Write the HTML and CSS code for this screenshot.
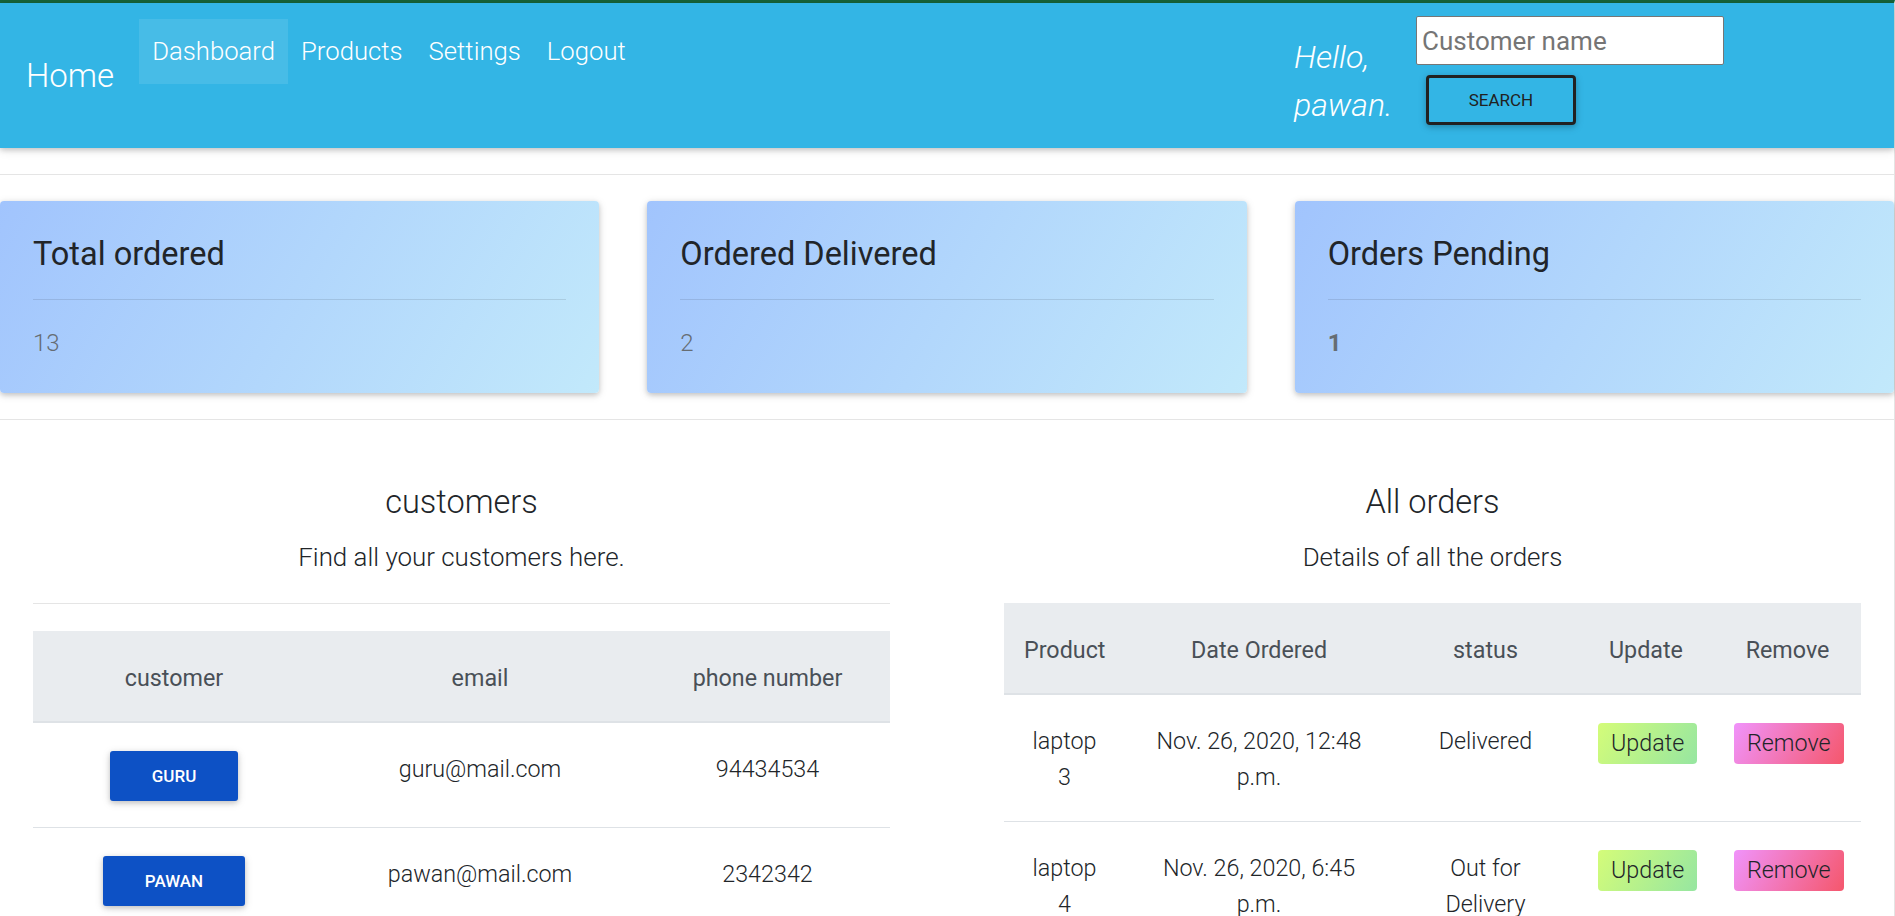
FILE: index.html
```html
<!DOCTYPE html>
<html lang="en">
<head>
<meta charset="utf-8">
<title>Dashboard</title>
<link rel="stylesheet" href="styles.css">
</head>
<body>
<div class="page">
  <nav class="navbar">
    <a class="brand" href="#">Home</a>
    <ul class="nav-links">
      <li><a class="nav-link active" href="#">Dashboard</a></li>
      <li><a class="nav-link" href="#">Products</a></li>
      <li><a class="nav-link" href="#">Settings</a></li>
      <li><a class="nav-link" href="#">Logout</a></li>
    </ul>
    <div class="nav-right">
      <span class="greeting">Hello, pawan.</span>
      <form class="search-form">
        <input class="search-input" type="text" placeholder="Customer name">
        <button class="btn-search" type="button">Search</button>
      </form>
    </div>
  </nav>

  <hr class="divider">

  <section class="stats">
    <div class="stat-card">
      <h5 class="stat-title">Total ordered</h5>
      <hr class="stat-rule">
      <p class="stat-value">13</p>
    </div>
    <div class="stat-card">
      <h5 class="stat-title">Ordered Delivered</h5>
      <hr class="stat-rule">
      <p class="stat-value">2</p>
    </div>
    <div class="stat-card">
      <h5 class="stat-title">Orders Pending</h5>
      <hr class="stat-rule">
      <p class="stat-value stat-value-strong">1</p>
    </div>
  </section>

  <hr class="divider">

  <section class="tables">
    <div class="panel">
      <h5 class="panel-title">customers</h5>
      <p class="panel-sub">Find all your customers here.</p>
      <hr class="panel-rule">
      <table class="data-table">
        <colgroup>
          <col class="c-cust">
          <col class="c-email">
          <col class="c-phone">
        </colgroup>
        <thead>
          <tr><th>customer</th><th>email</th><th>phone number</th></tr>
        </thead>
        <tbody>
          <tr>
            <td><a class="btn-name" href="#">Guru</a></td>
            <td>guru@mail.com</td>
            <td>94434534</td>
          </tr>
          <tr>
            <td><a class="btn-name" href="#">Pawan</a></td>
            <td>pawan@mail.com</td>
            <td>2342342</td>
          </tr>
        </tbody>
      </table>
    </div>

    <div class="panel">
      <h5 class="panel-title">All orders</h5>
      <p class="panel-sub">Details of all the orders</p>
      <table class="data-table">
        <colgroup>
          <col class="c-product">
          <col class="c-date">
          <col class="c-status">
          <col class="c-update">
          <col class="c-remove">
        </colgroup>
        <thead>
          <tr><th>Product</th><th>Date Ordered</th><th>status</th><th>Update</th><th>Remove</th></tr>
        </thead>
        <tbody>
          <tr>
            <td>laptop 3</td>
            <td>Nov. 26, 2020, 12:48 p.m.</td>
            <td>Delivered</td>
            <td><a class="btn-update" href="#">Update</a></td>
            <td><a class="btn-remove" href="#">Remove</a></td>
          </tr>
          <tr>
            <td>laptop 4</td>
            <td>Nov. 26, 2020, 6:45 p.m.</td>
            <td>Out for Delivery</td>
            <td><a class="btn-update" href="#">Update</a></td>
            <td><a class="btn-remove" href="#">Remove</a></td>
          </tr>
        </tbody>
      </table>
    </div>
  </section>
</div>
</body>
</html>
```

FILE: styles.css
```css
* { box-sizing: border-box; }

html, body {
  margin: 0;
  padding: 0;
  background: #fff;
}

body {
  overflow: hidden;
  font-family: Roboto, "Noto Sans", "Liberation Sans", sans-serif;
  font-weight: 300;
  font-size: 26px;
  line-height: 1.5;
  color: #212529;
}

.page {
  width: 1895px;
  border-top: 3px solid #17643a;
  border-right: 1px solid #e4e4e4;
  min-height: 916px;
}

/* ---------- navbar ---------- */
.navbar {
  position: relative;
  display: flex;
  align-items: flex-start;
  height: 145px;
  padding: 13px 24px 13px 26px;
  background: #33b5e5;
  box-shadow: 0 2px 5px 0 rgba(0,0,0,.16), 0 2px 10px 0 rgba(0,0,0,.12);
}

.brand {
  align-self: center;
  margin-right: 25px;
  font-size: 33px;
  font-weight: 300;
  line-height: 1.5;
  color: #fff;
  text-decoration: none;
}

.nav-links {
  display: flex;
  margin: 3px 0 0;
  padding: 0;
  list-style: none;
}

.nav-link {
  display: block;
  padding: 13px 13px;
  font-size: 25.7px;
  line-height: 39px;
  font-weight: 300;
  color: #fff;
  text-decoration: none;
}

.nav-link.active {
  background: rgba(255,255,255,.1);
}

.nav-right {
  display: flex;
  align-items: flex-start;
  margin-left: auto;
  margin-right: 146px;
}

.greeting {
  width: 104px;
  margin: 17px 18px 0 0;
  font-size: 32px;
  font-style: italic;
  font-weight: 300;
  line-height: 48px;
  color: #fff;
}

.search-form {
  display: flex;
  flex-direction: column;
  align-items: flex-start;
  width: 308px;
}

.search-input {
  width: 308px;
  height: 49px;
  padding: 0 5px;
  border: 1px solid #767676;
  border-radius: 2px;
  background: #fff;
  font-family: Roboto, "Noto Sans", sans-serif;
  font-size: 26px;
  font-weight: 400;
  color: #212529;
}

.search-input::placeholder {
  color: #757575;
}

.btn-search {
  width: 150px;
  height: 50px;
  margin: 10px 0 0 10px;
  border: 3px solid #212121;
  border-radius: 4px;
  background: transparent;
  font-family: Roboto, "Noto Sans", sans-serif;
  font-size: 17px;
  font-weight: 400;
  text-transform: uppercase;
  color: #212121;
  box-shadow: 0 2px 5px 0 rgba(0,0,0,.16), 0 2px 10px 0 rgba(0,0,0,.12);
}

/* ---------- dividers ---------- */
.divider {
  margin: 26px 0;
  border: 0;
  border-top: 1px solid rgba(0,0,0,.1);
}

/* ---------- stat cards ---------- */
.stats {
  display: grid;
  grid-template-columns: repeat(3, 1fr);
  gap: 48px;
}

.stat-card {
  padding: 34px 33px 32px;
  border-radius: 4px;
  background: linear-gradient(120deg, #a1c4fd 0%, #c2e9fb 100%);
  box-shadow: 0 2px 5px 0 rgba(0,0,0,.16), 0 2px 10px 0 rgba(0,0,0,.12);
}

.stat-title {
  margin: 0;
  font-size: 32.5px;
  font-weight: 400;
  line-height: 1.2;
  color: #212529;
}

.stat-rule {
  margin: 25px 0 25px;
  border: 0;
  border-top: 1px solid rgba(0,0,0,.1);
}

.stat-value {
  margin: 0;
  font-size: 24px;
  line-height: 36px;
  font-weight: 300;
  color: #666d73;
}

.stat-value-strong {
  font-weight: 700;
}

/* ---------- tables ---------- */
.tables {
  display: grid;
  grid-template-columns: 857px 857px;
  column-gap: 114px;
  padding: 37px 0 0 33px;
}

.panel-title {
  margin: 0 0 15px;
  font-size: 32.5px;
  font-weight: 300;
  line-height: 1.2;
  text-align: center;
  color: #212529;
}

.panel-sub {
  margin: 0 0 26px;
  font-size: 25.9px;
  line-height: 40px;
  font-weight: 300;
  text-align: center;
}

.panel-rule {
  margin: 0 0 27px;
  border: 0;
  border-top: 1px solid rgba(0,0,0,.1);
}

.data-table {
  width: 100%;
  border-collapse: collapse;
  table-layout: fixed;
}

.c-cust { width: 282px; }
.c-email { width: 330px; }
.c-phone { width: 245px; }

.c-product { width: 121px; }
.c-date { width: 268px; }
.c-status { width: 185px; }
.c-update { width: 136px; }
.c-remove { width: 147px; }

.data-table th {
  padding: 29px 20px 25px;
  background: #e9ecef;
  border-bottom: 2px solid #dee2e6;
  font-size: 23.3px;
  line-height: 36px;
  font-weight: 400;
  color: #495057;
  text-align: center;
  white-space: nowrap;
}

.data-table td {
  padding: 28px 20px 26px;
  border-top: 1px solid #dee2e6;
  font-size: 23.3px;
  line-height: 36px;
  font-weight: 300;
  text-align: center;
  vertical-align: top;
  color: #212529;
}

.data-table thead + tbody tr:first-child td {
  border-top: 0;
}

.btn-name {
  display: inline-block;
  vertical-align: top;
  height: 50px;
  padding: 0 42px;
  border-radius: 3px;
  background: #0d51c5;
  font-size: 17px;
  font-weight: 500;
  line-height: 50px;
  text-transform: uppercase;
  color: #fff;
  text-decoration: none;
  box-shadow: 0 2px 5px 0 rgba(0,0,0,.16), 0 2px 10px 0 rgba(0,0,0,.12);
}

.btn-update,
.btn-remove {
  display: inline-block;
  padding: 2px 13px 3px;
  border-radius: 4px;
  font-size: 23.3px;
  font-weight: 300;
  line-height: 36px;
  color: #212529;
  text-decoration: none;
}

.btn-update {
  background: linear-gradient(120deg, #d4fc79 0%, #96e6a1 100%);
}

.btn-remove {
  background: linear-gradient(120deg, #f093fb 0%, #f5576c 100%);
}
```
